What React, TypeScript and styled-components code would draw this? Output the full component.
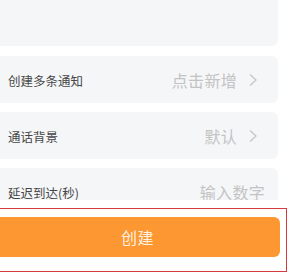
import React from "react";
import styled, { createGlobalStyle } from "styled-components";

const Global = createGlobalStyle`
  html, body { margin: 0; padding: 0; background: #ffffff; }
  body { width: 289px; height: 272px; overflow: hidden; }
  #root { width: 289px; height: 272px; overflow: hidden; }
`;

const Page = styled.div`
  width: 293px;
  margin-left: -6px;
  height: 272px;
  display: flex;
  flex-direction: column;
  font-family: "Noto Sans CJK SC", "Noto Sans", sans-serif;
  background: #ffffff;
`;

const Scroll = styled.div`
  height: 200px;
  overflow: hidden;
  display: flex;
  flex-direction: column;
  gap: 9px;
  padding-right: 9px;
`;

const TopCard = styled.div`
  height: 46px;
  flex-shrink: 0;
  background: #f5f6f8;
  border-radius: 0 0 6px 6px;
  margin-bottom: 1px;
`;

const Row = styled.div`
  flex-shrink: 0;
  height: 47px;
  background: #f5f6f8;
  border-radius: 6px;
  display: flex;
  align-items: center;
  padding: 0 13px 0 14px;
  box-sizing: border-box;
`;

const Label = styled.span`
  font-size: 12.5px;
  color: #474747;
  flex: 1;
  margin-top: 2px;
`;

const Value = styled.span`
  font-size: 16px;
  color: #c3c3c3;
  letter-spacing: 0.3px;
`;

const Chevron = styled.svg`
  width: 10px;
  height: 14px;
  margin: 0 7px 0 11px;
  flex-shrink: 0;
`;

const Footer = styled.div`
  flex: 1;
  padding-top: 8px;
  display: flex;
  flex-direction: column;
`;

const Frame = styled.div`
  flex: 1;
  border: 1.5px solid #d63a3f;
  border-bottom-width: 1px;
  padding: 7.5px 6px 13px 0;
  box-sizing: border-box;
`;

const Button = styled.button`
  width: 100%;
  height: 40px;
  border: none;
  border-radius: 6px;
  background: #fd9731;
  color: #fff1e0;
  font-family: "Noto Sans CJK SC", "Noto Sans", sans-serif;
  font-size: 16px;
  letter-spacing: 0.5px;
  padding: 0;
  display: flex;
  align-items: center;
  justify-content: center;
`;

const Arrow = () => (
  <Chevron viewBox="0 0 10 14">
    <path d="M2 1.5 L8 7 L2 12.5" fill="none" stroke="#c6c6c6" strokeWidth="1.3" />
  </Chevron>
);

export default function App() {
  return (
    <>
      <Global />
      <Page>
        <Scroll>
          <TopCard />
          <Row>
            <Label>创建多条通知</Label>
            <Value>点击新增</Value>
            <Arrow />
          </Row>
          <Row>
            <Label>通话背景</Label>
            <Value>默认</Value>
            <Arrow />
          </Row>
          <Row>
            <Label>延迟到达(秒)</Label>
            <Value>输入数字</Value>
          </Row>
        </Scroll>
        <Footer>
          <Frame>
            <Button>创建</Button>
          </Frame>
        </Footer>
      </Page>
    </>
  );
}
